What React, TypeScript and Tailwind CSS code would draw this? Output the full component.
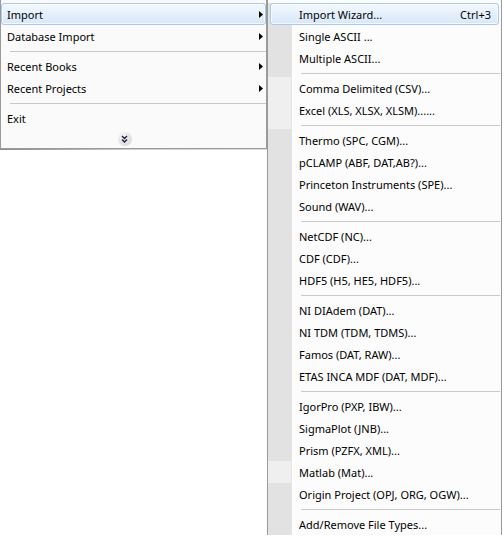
import React from "react"

type Item =
  | { kind: "sep"; light?: boolean }
  | { kind: "item"; label: string; shortcut?: string; active?: boolean; light?: boolean }

const subItems: Item[] = [
  { kind: "item", label: "Import Wizard...", shortcut: "Ctrl+3", active: true },
  { kind: "item", label: "Single ASCII ..." },
  { kind: "item", label: "Multiple ASCII..." },
  { kind: "sep" },
  { kind: "item", label: "Comma Delimited (CSV)...", light: true },
  { kind: "item", label: "Excel (XLS, XLSX, XLSM)......", light: true },
  { kind: "sep", light: true },
  { kind: "item", label: "Thermo (SPC, CGM)..." },
  { kind: "item", label: "pCLAMP (ABF, DAT,AB?)..." },
  { kind: "item", label: "Princeton Instruments (SPE)..." },
  { kind: "item", label: "Sound (WAV)..." },
  { kind: "sep" },
  { kind: "item", label: "NetCDF (NC)..." },
  { kind: "item", label: "CDF (CDF)..." },
  { kind: "item", label: "HDF5 (H5, HE5, HDF5)..." },
  { kind: "sep" },
  { kind: "item", label: "NI DIAdem (DAT)..." },
  { kind: "item", label: "NI TDM (TDM, TDMS)..." },
  { kind: "item", label: "Famos (DAT, RAW)..." },
  { kind: "item", label: "ETAS INCA MDF (DAT, MDF)..." },
  { kind: "sep" },
  { kind: "item", label: "IgorPro (PXP, IBW)..." },
  { kind: "item", label: "SigmaPlot (JNB)..." },
  { kind: "item", label: "Prism (PZFX, XML)..." },
  { kind: "item", label: "Matlab (Mat)...", light: true },
  { kind: "item", label: "Origin Project (OPJ, ORG, OGW)..." },
  { kind: "sep" },
  { kind: "item", label: "Add/Remove File Types..." },
]

const Arrow = () => (
  <svg width="4" height="7" viewBox="0 0 4 7" className="shrink-0">
    <path d="M0 0 L4 3.5 L0 7 Z" fill="#000" />
  </svg>
)

const Highlight = () => (
  <div className="absolute inset-y-0 left-[2px] right-[2px] rounded-[3px] border border-[#a9c9ed] bg-gradient-to-b from-[#f3f8fe] to-[#d8e7f9] shadow-[inset_0_0_0_1px_rgba(255,255,255,0.7)]" />
)

const MainRow = ({ label, active }: { label: string; active?: boolean }) => (
  <div className="relative h-[22px] flex items-center pl-[6px] pr-[3px]">
    {active && (
      <div className="absolute inset-0 rounded-[3px] border border-[#a9c9ed] bg-gradient-to-b from-[#f3f8fe] to-[#d8e7f9] shadow-[inset_0_0_0_1px_rgba(255,255,255,0.7)]" />
    )}
    <span className="relative flex-1">{label}</span>
    <span className="relative">
      <Arrow />
    </span>
  </div>
)

const SubRow = ({ item }: { item: Item }) => {
  const gutter = item.light ? "bg-[#efefef]" : "bg-[#e2e2e2]"
  if (item.kind === "sep") {
    return (
      <div className="flex h-[8px]">
        <div className={`w-[23px] ${gutter}`} />
        <div className="w-px bg-[#e2e3e3]" />
        <div className="w-px bg-white" />
        <div className="flex-1 flex items-center pl-[8px] pr-[1px]">
          <div className="h-px w-full bg-[#c9c9c9]" />
        </div>
      </div>
    )
  }
  return (
    <div className="relative flex h-[22px]">
      <div className={`w-[23px] ${gutter}`} />
      <div className="w-px bg-[#e2e3e3]" />
      <div className="w-px bg-white" />
      {item.active && <Highlight />}
      <div className="relative flex-1 flex items-center pl-[6px] pr-[10px]">
        <span className="flex-1">{item.label}</span>
        {item.shortcut && <span>{item.shortcut}</span>}
      </div>
    </div>
  )
}

const App = () => {
  return (
    <div className="w-[504px] h-[536px] overflow-hidden bg-white flex items-start text-[11px] leading-none text-black font-['Segoe_UI','Noto_Sans',sans-serif]">
      <div className="flex flex-col">
        <div className="w-[267px] h-[149px] bg-[#fafafa] border-l border-r border-b border-[#9a9a9a] pt-[3px] flex flex-col">
          <MainRow label="Import" active />
          <MainRow label="Database Import" />
          <div className="h-[8px] flex items-center pl-[9px]">
            <div className="h-px w-full bg-[#c9c9c9]" />
          </div>
          <MainRow label="Recent Books" />
          <MainRow label="Recent Projects" />
          <div className="h-[8px] flex items-center pl-[9px]">
            <div className="h-px w-full bg-[#c9c9c9]" />
          </div>
          <div className="h-[22px] flex items-center pl-[6px]">Exit</div>
          <div className="flex-1 flex items-center justify-center pr-[18px]">
            <div className="w-[14px] h-[14px] rounded-full bg-[radial-gradient(circle_at_40%_35%,#fbfbfb,#cfcfcf)] flex items-center justify-center">
              <svg width="7" height="8" viewBox="0 0 7 8">
                <path d="M1 1 L3.5 3.5 L6 1 M1 4.5 L3.5 7 L6 4.5" stroke="#1c1c3c" strokeWidth="1.4" fill="none" />
              </svg>
            </div>
          </div>
        </div>
        <div className="h-px w-[267px] bg-gradient-to-r from-[#8c8c8c] via-[#d0d0d0] to-[#dedede]" />
      </div>
      <div className="w-[235px] border-l border-r border-[#9a9a9a] bg-[#fcfcfc] pt-[3px] flex flex-col">
        {subItems.map((item, i) => (
          <SubRow key={i} item={item} />
        ))}
      </div>
    </div>
  )
}

export default App
